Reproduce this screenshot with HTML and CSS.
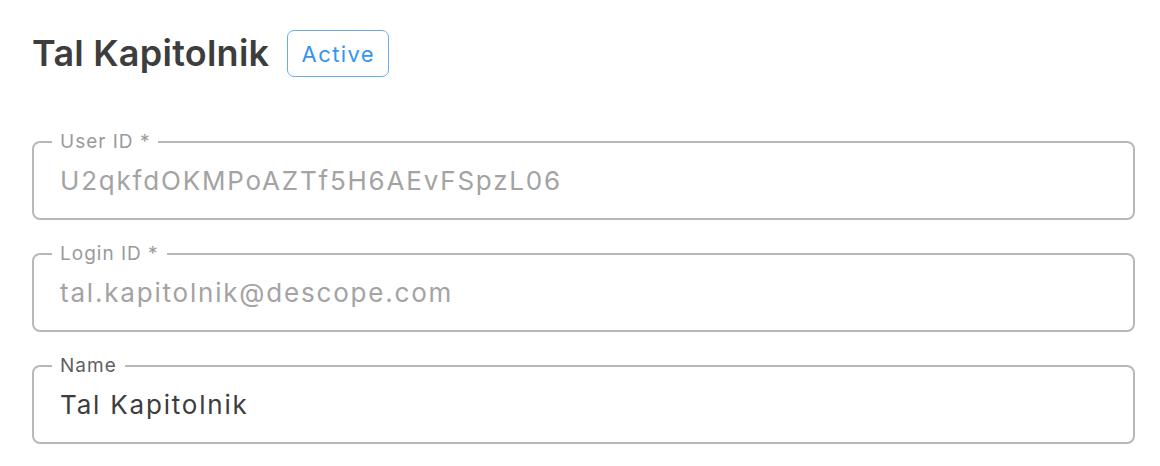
FILE: index.html
```html
<!DOCTYPE html>
<html>
<head>
<meta charset="utf-8">
<link rel="stylesheet" href="styles.css">
</head>
<body>
<div class="page">
  <div class="header">
    <h1 class="title">Tal Kapitolnik</h1>
    <span class="badge">Active</span>
  </div>
  <div class="fields">
    <fieldset class="field disabled">
      <legend class="label">User ID *</legend>
      <div class="value">U2qkfdOKMPoAZTf5H6AEvFSpzL06</div>
    </fieldset>
    <fieldset class="field disabled">
      <legend class="label">Login ID *</legend>
      <div class="value">tal.kapitolnik@descope.com</div>
    </fieldset>
    <fieldset class="field">
      <legend class="label">Name</legend>
      <div class="value">Tal Kapitolnik</div>
    </fieldset>
  </div>
</div>
</body>
</html>
```

FILE: styles.css
```css
* { box-sizing: border-box; }
html, body { margin: 0; padding: 0; background: #ffffff; }
body { font-family: Inter, Roboto, "Liberation Sans", sans-serif; color: #3d3d3d; }

.page {
  width: 1160px;
  padding: 30px 25px 0 32px;
}

.header {
  display: flex;
  align-items: center;
  gap: 18px;
  height: 47px;
}

.title {
  margin: 0;
  font-size: 36px;
  font-weight: 600;
  line-height: 47px;
  color: #3d3d3d;
  letter-spacing: 0.25px;
}

.badge {
  display: inline-flex;
  align-items: center;
  justify-content: center;
  height: 47px;
  width: 102px;
  border: 1.5px solid #67adf5;
  border-radius: 7px;
  color: #3594f0;
  font-size: 22px;
  font-weight: 400;
  letter-spacing: 1.4px;
}

.fields {
  display: flex;
  flex-direction: column;
  gap: 23px;
  margin-top: 54px;
}

.field {
  margin: 0;
  min-width: 0;
  border: 2px solid #b8b8b8;
  border-radius: 8px;
  padding: 13px 26px 22px 26px;
}

.label {
  margin-left: -8px;
  padding: 0 8px;
  font-size: 19px;
  line-height: 22px;
  letter-spacing: 1px;
  color: #5f5f5f;
}

.value {
  font-size: 26px;
  line-height: 30px;
  letter-spacing: 1.8px;
  color: #3d3d3d;
}

.field.disabled .label { color: #9a9a9a; }
.field.disabled .value { color: #a3a3a3; }
```
